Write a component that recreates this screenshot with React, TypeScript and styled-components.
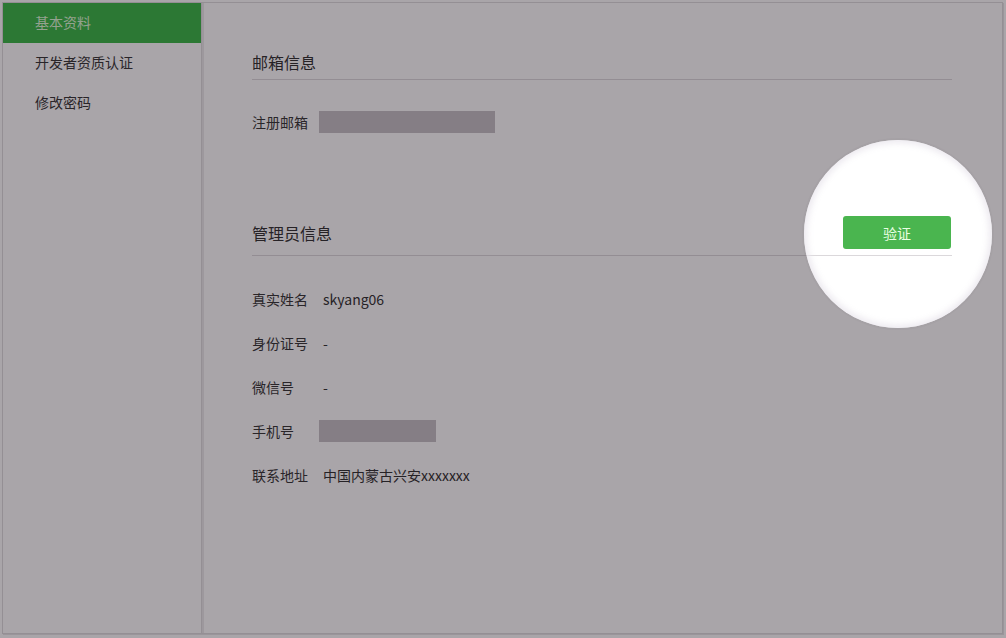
import React from "react";
import styled, { createGlobalStyle } from "styled-components";

const Global = createGlobalStyle`
  html, body { margin: 0; padding: 0; background: #ffffff; }
  body { font-family: "Microsoft YaHei", "Noto Sans CJK SC", "Liberation Sans", sans-serif; }
  * { box-sizing: border-box; }
`;

const Page = styled.div`
  position: relative;
  width: 1006px;
  height: 638px;
  padding: 2px 3px 4px 2px;
  overflow: hidden;
  background: #ffffff;
`;

const Panel = styled.div`
  display: flex;
  height: 100%;
  border: 1px solid #dcdadc;
  box-shadow: 1px 1px 0 #e6e4e6;
`;

const Sidebar = styled.nav`
  width: 199px;
  flex-shrink: 0;
  border-right: 1px solid #dcdadc;
  box-shadow: 2px 0 0 #eceaec;
  display: flex;
  flex-direction: column;
`;

const NavItem = styled.div<{ $active?: boolean }>`
  height: 40px;
  display: flex;
  align-items: center;
  padding: 0 0 2px 32px;
  font-size: 14px;
  color: ${(p) => (p.$active ? "#dcf8d4" : "#2b2b2b")};
  background: ${(p) => (p.$active ? "#2fb53c" : "transparent")};
`;

const Main = styled.main`
  flex: 1;
  padding: 41px 50px 0 50px;
  display: flex;
  flex-direction: column;
`;

const Section = styled.section<{ $gap?: number }>`
  margin-bottom: ${(p) => p.$gap ?? 0}px;
`;

const SectionHead = styled.div<{ $h: number }>`
  height: ${(p) => p.$h}px;
  display: flex;
  align-items: center;
  justify-content: space-between;
  border-bottom: 1px solid #dbd8db;
`;

const Title = styled.h2`
  margin: 0;
  font-size: 16px;
  font-weight: normal;
  color: #262626;
`;

const VerifyButton = styled.button`
  width: 108px;
  height: 33px;
  margin-right: 1px;
  border: none;
  border-radius: 3px;
  background: #4ab54f;
  color: #eaffe4;
  font-size: 14px;
  font-family: inherit;
  position: relative;
  z-index: 3;
`;

const Rows = styled.div<{ $top: number }>`
  padding-top: ${(p) => p.$top}px;
  display: flex;
  flex-direction: column;
  gap: 22px;
`;

const Row = styled.div`
  height: 22px;
  display: flex;
  align-items: center;
  font-size: 14px;
  color: #262626;
`;

const Label = styled.span`
  width: 67px;
  flex-shrink: 0;
  font-size: 14px;
  color: #2b2b2b;
`;

const Value = styled.span`
  padding-left: 4px;
  font-size: 14px;
  color: #262626;
`;

const Masked = styled.div<{ $w: number }>`
  width: ${(p) => p.$w}px;
  height: 22px;
  background: #c4bec4;
`;

const Spotlight = styled.div`
  position: absolute;
  left: 804px;
  top: 140px;
  width: 188px;
  height: 188px;
  border-radius: 50%;
  pointer-events: none;
  z-index: 2;
  box-shadow: inset 0 0 6px 3px rgba(235, 232, 238, 0.9),
    0 0 0 2px rgba(150, 140, 150, 0.15),
    0 0 0 2000px rgba(40, 30, 40, 0.4);
`;

export default function App() {
  return (
    <>
      <Global />
      <Page>
        <Panel>
          <Sidebar>
            <NavItem $active>基本资料</NavItem>
            <NavItem>开发者资质认证</NavItem>
            <NavItem>修改密码</NavItem>
          </Sidebar>
          <Main>
            <Section $gap={77}>
              <SectionHead $h={36}>
                <Title>邮箱信息</Title>
              </SectionHead>
              <Rows $top={31}>
                <Row>
                  <Label>注册邮箱</Label>
                  <Masked $w={176} />
                </Row>
              </Rows>
            </Section>
            <Section>
              <SectionHead $h={46}>
                <Title>管理员信息</Title>
                <VerifyButton>验证</VerifyButton>
              </SectionHead>
              <Rows $top={32}>
                <Row>
                  <Label>真实姓名</Label>
                  <Value>skyang06</Value>
                </Row>
                <Row>
                  <Label>身份证号</Label>
                  <Value>-</Value>
                </Row>
                <Row>
                  <Label>微信号</Label>
                  <Value>-</Value>
                </Row>
                <Row>
                  <Label>手机号</Label>
                  <Masked $w={117} />
                </Row>
                <Row>
                  <Label>联系地址</Label>
                  <Value>中国内蒙古兴安xxxxxxx</Value>
                </Row>
              </Rows>
            </Section>
          </Main>
        </Panel>
        <Spotlight />
      </Page>
    </>
  );
}
